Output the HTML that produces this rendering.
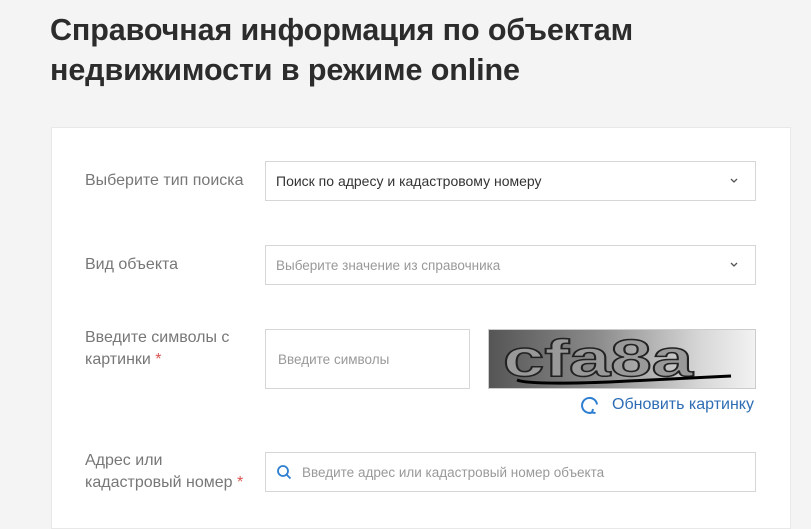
<!DOCTYPE html>
<html><head><meta charset="utf-8"><style>
body{margin:0;width:811px;height:502px;background:#f4f4f4;font-family:"Liberation Sans",sans-serif;position:relative;overflow:hidden}
h1{position:absolute;left:50px;top:10px;margin:0;font-size:30.5px;line-height:40px;font-weight:bold;color:#2c2c2c;letter-spacing:-0.1px}
.card{position:absolute;left:51px;top:127px;width:738px;height:400px;background:#fff;border:1px solid #e8e8e8}
.lbl{position:absolute;left:85px;font-size:16px;color:#777;line-height:22px}
.in{position:absolute;background:#fff;border:1px solid #d6d6d6;box-sizing:border-box;font-size:14px;color:#333;padding-left:10px;display:flex;align-items:center}
.ph{color:#999;font-size:13.5px}
.chev{position:absolute;right:16px;top:13px}
.req{color:#d9534f}
</style></head><body>
<h1>Справочная информация по объектам<br>недвижимости в режиме online</h1>
<div class="card"></div>
<div class="lbl" style="top:170px">Выберите тип поиска</div>
<div class="in" style="left:265px;top:161px;width:491px;height:40px">Поиск по адресу и кадастровому номеру<svg class="chev" width="10" height="10" viewBox="0 0 10 10"><path d="M2 4l3 3 3-3" fill="none" stroke="#555" stroke-width="1.3"/></svg></div>
<div class="lbl" style="top:254px">Вид объекта</div>
<div class="in ph" style="left:265px;top:245px;width:491px;height:40px">Выберите значение из справочника<svg class="chev" width="10" height="10" viewBox="0 0 10 10"><path d="M2 4l3 3 3-3" fill="none" stroke="#555" stroke-width="1.3"/></svg></div>
<div class="lbl" style="top:327px">Введите символы с<br>картинки <span class="req">*</span></div>
<div class="in ph" style="left:265px;top:329px;width:205px;height:60px;padding-left:12px">Введите символы</div>
<div style="position:absolute;left:488px;top:329px;width:268px;height:60px;border:1px solid #ccc;box-sizing:border-box;background:linear-gradient(90deg,#555 0%,#8a8a8a 40%,#d8d8d8 80%,#f2f2f2 100%);overflow:hidden">
<svg width="268" height="60"><text x="14" y="46" font-family="Liberation Sans" font-size="52" font-weight="bold" fill="#999" stroke="#222" stroke-width="1.5" textLength="190" lengthAdjust="spacingAndGlyphs">cfa8a</text><path d="M28 50 Q40 55 120 52 L242 46" stroke="#000" stroke-width="3" fill="none"/></svg></div>
<div style="position:absolute;left:580px;top:394px;font-size:16px;color:#2e6db4;line-height:22px;display:flex;align-items:center"><svg width="20" height="20" viewBox="0 0 20 20" style="margin-right:12px"><path d="M12 17.5A7.5 7.5 0 1 1 17 9.5" fill="none" stroke="#2e7fd1" stroke-width="2"/><path d="M13 14l-1 3.5 3.5 0.5" fill="none" stroke="#2e7fd1" stroke-width="2"/></svg>Обновить картинку</div>
<div class="lbl" style="top:450px">Адрес или<br>кадастровый номер <span class="req">*</span></div>
<div class="in ph" style="left:265px;top:452px;width:491px;height:40px;padding-left:10px"><svg width="16" height="16" viewBox="0 0 16 16" style="margin-right:10px"><circle cx="7" cy="7" r="5" fill="none" stroke="#2e7fd1" stroke-width="1.8"/><path d="M11 11l3.5 3.5" stroke="#2e7fd1" stroke-width="1.8"/></svg>Введите адрес или кадастровый номер объекта</div>
</body></html>
